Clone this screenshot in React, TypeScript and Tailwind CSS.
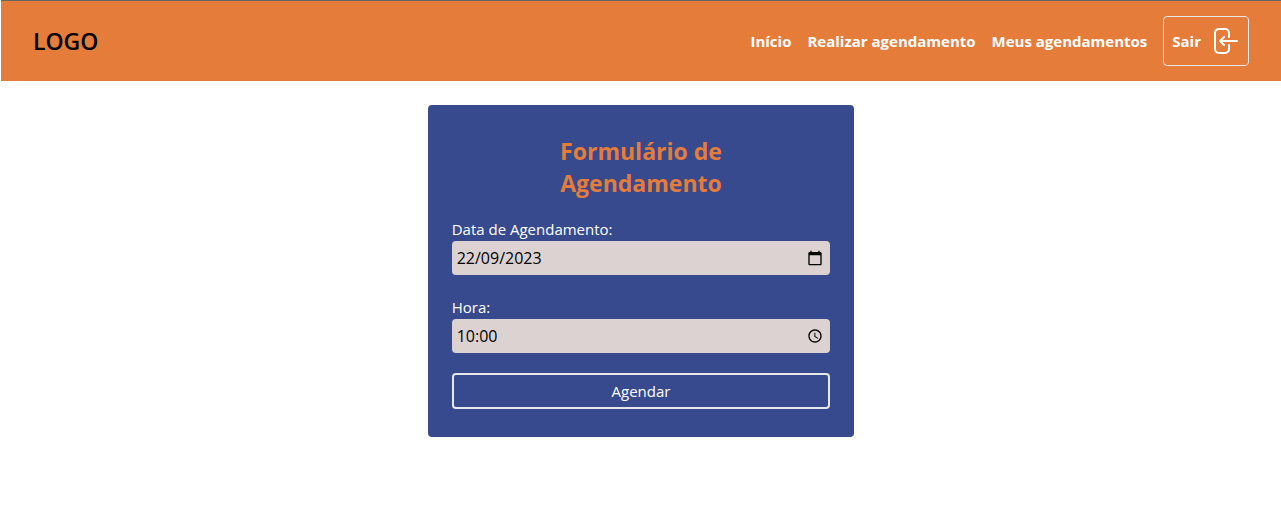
import type { ReactNode } from "react";

const navLinks = ["Início", "Realizar agendamento", "Meus agendamentos"];

function ExitIcon() {
  return (
    <svg className="h-8 w-8" viewBox="0 0 32 32" fill="none" stroke="currentColor" strokeWidth="2" strokeLinecap="round" strokeLinejoin="round" aria-hidden="true">
      <path d="M20 12V8a4 4 0 0 0-4-4h-6a4 4 0 0 0-4 4v16a4 4 0 0 0 4 4h6a4 4 0 0 0 4-4v-4" />
      <path d="M28 16H11M15 12l-4 4 4 4" />
    </svg>
  );
}

function CalendarIcon() {
  return (
    <svg className="h-4 w-4" viewBox="0 0 24 24" fill="currentColor" aria-hidden="true">
      <path d="M20 3h-1V1h-2v2H7V1H5v2H4c-1.1 0-2 .9-2 2v16c0 1.1.9 2 2 2h16c1.1 0 2-.9 2-2V5c0-1.1-.9-2-2-2zm0 18H4V8h16v13z" />
    </svg>
  );
}

function ClockIcon() {
  return (
    <svg className="h-4 w-4" viewBox="0 0 24 24" fill="currentColor" aria-hidden="true">
      <path d="M11.99 2C6.47 2 2 6.48 2 12s4.47 10 9.99 10C17.52 22 22 17.52 22 12S17.52 2 11.99 2zM12 20c-4.42 0-8-3.58-8-8s3.58-8 8-8 8 3.58 8 8-3.58 8-8 8zm.5-13H11v6l5.25 3.15.75-1.23-4.5-2.67z" />
    </svg>
  );
}

interface FieldProps {
  id: string;
  label: string;
  value: string;
  pickerLabel: string;
  icon: ReactNode;
}

function Field({ id, label, value, pickerLabel, icon }: FieldProps) {
  return (
    <div className="flex flex-col">
      <label htmlFor={id} className="leading-6 text-white">
        {label}
      </label>
      <div className="flex h-[34px] items-center rounded bg-[#dcd2d1] px-[5px] text-base text-black">
        <input id={id} type="text" defaultValue={value} className="min-w-0 flex-1 bg-transparent outline-none" />
        <button type="button" aria-label={pickerLabel} className="px-0.5">
          {icon}
        </button>
      </div>
    </div>
  );
}

export default function App() {
  return (
    <div className="pl-px font-['Open_Sans',sans-serif] text-[15px] leading-6">
      <header className="flex h-[81px] items-center justify-between border-t border-[#666666] bg-[#e57c3a] px-8">
        <a href="#" className="text-[23px] leading-8 font-semibold text-black">
          LOGO
        </a>
        <nav className="flex items-center gap-4 font-bold text-white">
          {navLinks.map((label) => (
            <a key={label} href="#">
              {label}
            </a>
          ))}
          <button type="button" className="flex h-[50px] items-center gap-2 rounded border border-gray-200 pr-[7px] pl-2">
            Sair
            <ExitIcon />
          </button>
        </nav>
      </header>
      <main className="flex justify-center pt-6">
        <form className="flex w-1/3 flex-col rounded bg-[#374a8e] px-6 pt-[30px] pb-7">
          <h1 className="mx-auto mb-[18px] w-1/2 text-center text-[23px] leading-8 font-bold text-[#e57c3a]">Formulário de Agendamento</h1>
          <div className="mb-5 flex flex-col gap-5">
            <Field id="data" label="Data de Agendamento:" value="22/09/2023" pickerLabel="Abrir calendário" icon={<CalendarIcon />} />
            <Field id="hora" label="Hora:" value="10:00" pickerLabel="Escolher hora" icon={<ClockIcon />} />
          </div>
          <button type="submit" className="h-9 rounded border-2 border-gray-200 text-white">
            Agendar
          </button>
        </form>
      </main>
    </div>
  );
}
